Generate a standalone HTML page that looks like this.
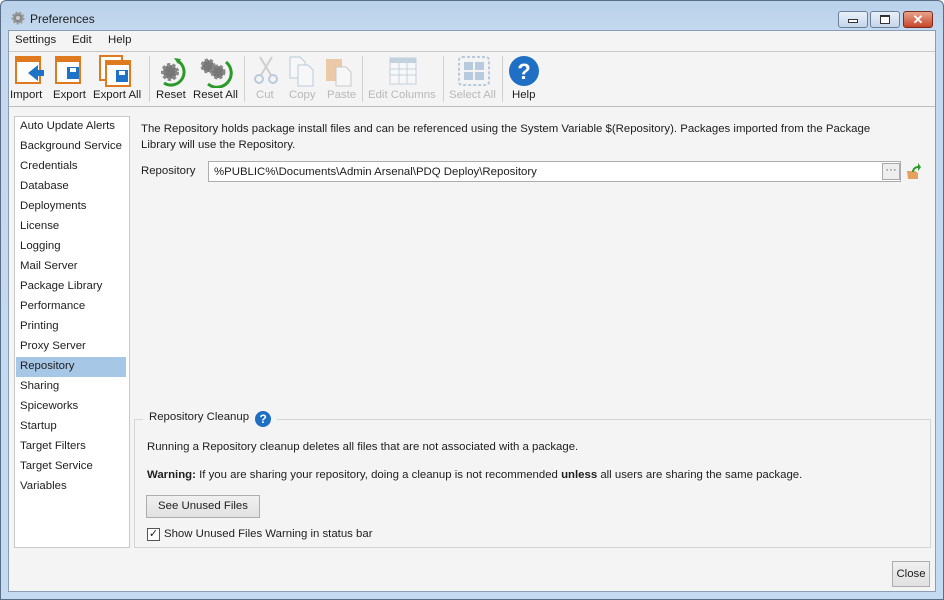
<!DOCTYPE html>
<html><head><style>
*{margin:0;padding:0;box-sizing:border-box}
body{width:944px;height:600px;overflow:hidden;background:#fff;font:11.4px "Liberation Sans",sans-serif;color:#1e1e1e;position:relative}
.frame{position:absolute;left:0;top:0;width:944px;height:600px;background:linear-gradient(#b9d1ea,#c4d9ef 30px,#c4daf0);border:1px solid #5a6e87;border-radius:6px 6px 0 0}
.client{position:absolute;left:8px;top:30px;width:928px;height:562px;background:#f4f4f4;border:1px solid #8a9db5}
.abs{position:absolute;white-space:nowrap}
.tb{position:absolute;top:89px;font-size:11.4px;white-space:nowrap}
.dis{color:#b8b8b8}
.sep{position:absolute;top:56px;width:1px;height:46px;background:#d0d0d0}
.list{position:absolute;left:14px;top:116px;width:116px;height:432px;background:#fff;border:1px solid #c8c8c8}
.list div{height:20px;line-height:18px;padding-left:4px;margin:0 3px 0 1px;white-space:nowrap}
.sel{background:#a7c7e7}
.wb{position:absolute;top:11px;height:17px;border:1px solid #6d7f98;border-radius:3px;background:linear-gradient(#eaf1fa,#c4d5ea)}
</style></head><body>
<div class="frame"></div>
<svg class="abs" style="left:10px;top:10px" width="16" height="16" viewBox="0 0 16 16"><circle cx="8" cy="8" r="5" fill="#888" stroke="#999" stroke-width="3" stroke-dasharray="2 1.5"/><circle cx="8" cy="8" r="2" fill="#ccc"/></svg>
<div class="abs" style="left:30px;top:12px;font-size:12px">Preferences</div>
<div class="wb" style="left:838px;width:30px"><div style="position:absolute;left:9px;top:7px;width:10px;height:4px;border:1px solid #333;background:#fff"></div></div>
<div class="wb" style="left:870px;width:30px"><div style="position:absolute;left:9px;top:3px;width:10px;height:9px;border:1px solid #333;border-top-width:2px;background:#fff"></div></div>
<div class="wb" style="left:903px;width:30px;background:linear-gradient(#e8a48c,#c7452b);border-color:#7d2a1a;color:#fff;font-weight:bold;text-align:center;line-height:15px;font-size:13px">✕</div>
<div class="client"></div>
<div class="abs" style="left:15px;top:34px">Settings</div>
<div class="abs" style="left:72px;top:34px">Edit</div>
<div class="abs" style="left:108px;top:34px">Help</div>
<div class="abs" style="left:9px;top:51px;width:926px;height:1px;background:#c8c8c8"></div>
<div class="abs" style="left:9px;top:106px;width:926px;height:1px;background:#bdbdbd"></div>
<svg class="abs" style="left:14px;top:55px" width="34" height="32"><rect x="2" y="2" width="24" height="26" fill="#fff" stroke="#e07a1f" stroke-width="2"/><rect x="2" y="2" width="24" height="5" fill="#e07a1f"/><path d="M14 18l10-8v5h6v6h-6v5z" fill="#1f73c7"/></svg>
<svg class="abs" style="left:54px;top:55px" width="34" height="32"><rect x="2" y="2" width="24" height="26" fill="#fff" stroke="#e07a1f" stroke-width="2"/><rect x="2" y="2" width="24" height="5" fill="#e07a1f"/><rect x="13" y="12" width="12" height="12" fill="#1f73c7"/><rect x="16" y="13" width="6" height="4" fill="#fff"/></svg>
<svg class="abs" style="left:98px;top:54px" width="40" height="34"><rect x="2" y="2" width="22" height="24" fill="#fff" stroke="#e07a1f" stroke-width="2"/><rect x="8" y="7" width="24" height="25" fill="#fff" stroke="#e07a1f" stroke-width="2"/><rect x="8" y="7" width="24" height="4" fill="#e07a1f"/><rect x="18" y="16" width="12" height="12" fill="#1f73c7"/><rect x="21" y="17" width="6" height="4" fill="#fff"/></svg>
<svg class="abs" style="left:154px;top:55px" width="34" height="32"><circle cx="16" cy="17" r="7" fill="#777" stroke="#888" stroke-width="4" stroke-dasharray="3 2"/><path d="M24 6a12 12 0 0 1-14 22" fill="none" stroke="#2a9a2a" stroke-width="3"/><path d="M20 3l7 1-3 5z" fill="#2a9a2a"/></svg>
<svg class="abs" style="left:196px;top:54px" width="40" height="34"><circle cx="12" cy="12" r="6" fill="#777" stroke="#888" stroke-width="3" stroke-dasharray="3 2"/><circle cx="22" cy="18" r="6" fill="#777" stroke="#888" stroke-width="3" stroke-dasharray="3 2"/><path d="M30 8a13 13 0 0 1-18 22" fill="none" stroke="#2a9a2a" stroke-width="3"/></svg>
<svg class="abs" style="left:252px;top:55px" width="28" height="32" opacity=".35"><circle cx="7" cy="24" r="4" fill="none" stroke="#4a7fb8" stroke-width="2"/><circle cx="21" cy="24" r="4" fill="none" stroke="#4a7fb8" stroke-width="2"/><path d="M9 20L20 2M19 20L8 2" stroke="#888" stroke-width="2"/></svg>
<svg class="abs" style="left:288px;top:55px" width="30" height="32" opacity=".35"><path d="M2 2h10l5 5v16H2z" fill="#fff" stroke="#4a7fb8"/><path d="M10 10h10l5 5v16H10z" fill="#fff" stroke="#4a7fb8"/></svg>
<svg class="abs" style="left:324px;top:55px" width="34" height="32" opacity=".35"><rect x="2" y="4" width="16" height="22" fill="#e07a1f"/><path d="M12 12h10l5 5v14H12z" fill="#fff" stroke="#777"/></svg>
<svg class="abs" style="left:388px;top:56px" width="30" height="30" opacity=".35"><rect x="2" y="2" width="26" height="26" fill="#fff" stroke="#6a8fb8"/><rect x="2" y="2" width="26" height="5" fill="#6a8fb8"/><path d="M2 13h26M2 19h26M11 7v21M19 7v21" stroke="#6a8fb8"/></svg>
<svg class="abs" style="left:458px;top:56px" width="32" height="30" opacity=".35"><rect x="1" y="1" width="30" height="28" rx="3" fill="none" stroke="#4a7fb8" stroke-dasharray="3 2" stroke-width="2"/><rect x="6" y="6" width="9" height="8" fill="#4a7fb8"/><rect x="17" y="6" width="9" height="8" fill="#4a7fb8"/><rect x="6" y="16" width="9" height="8" fill="#4a7fb8"/><rect x="17" y="16" width="9" height="8" fill="#4a7fb8"/></svg>
<svg class="abs" style="left:508px;top:55px" width="32" height="32"><circle cx="16" cy="16" r="15" fill="#1f6fc5"/><text x="16" y="24" text-anchor="middle" fill="#fff" font-family="Liberation Sans" font-weight="bold" font-size="22">?</text></svg>
<div class="tb" style="left:10px">Import</div>
<div class="tb" style="left:53px">Export</div>
<div class="tb" style="left:93px">Export All</div>
<div class="tb" style="left:156px">Reset</div>
<div class="tb" style="left:193px">Reset All</div>
<div class="tb dis" style="left:256px">Cut</div>
<div class="tb dis" style="left:289px">Copy</div>
<div class="tb dis" style="left:327px">Paste</div>
<div class="tb dis" style="left:368px">Edit Columns</div>
<div class="tb dis" style="left:449px">Select All</div>
<div class="tb" style="left:512px">Help</div>
<div class="sep" style="left:149px"></div><div class="sep" style="left:244px"></div><div class="sep" style="left:362px"></div><div class="sep" style="left:443px"></div><div class="sep" style="left:502px"></div>
<div class="list">
<div>Auto Update Alerts</div><div>Background Service</div><div>Credentials</div><div>Database</div><div>Deployments</div><div>License</div><div>Logging</div><div>Mail Server</div><div>Package Library</div><div>Performance</div><div>Printing</div><div>Proxy Server</div><div class="sel">Repository</div><div>Sharing</div><div>Spiceworks</div><div>Startup</div><div>Target Filters</div><div>Target Service</div><div>Variables</div>
</div>
<div class="abs" style="left:141px;top:121px;line-height:16px">The Repository holds package install files and can be referenced using the System Variable $(Repository). Packages imported from the Package<br>Library will use the Repository.</div>
<div class="abs" style="left:141px;top:165px">Repository</div>
<div class="abs" style="left:208px;top:161px;width:693px;height:21px;background:#fff;border:1px solid #abadb3;padding:4px 0 0 5px">%PUBLIC%\Documents\Admin Arsenal\PDQ Deploy\Repository</div>
<div class="abs" style="left:882px;top:163px;width:18px;height:17px;border:1px solid #aaa;background:#eee;text-align:center;line-height:12px;color:#555">···</div>
<svg class="abs" style="left:905px;top:162px" width="16" height="18"><path d="M2 9h8l3 2v6H3z" fill="#e8a060"/><path d="M7 10a6 6 0 0 1 6-6V1l3 4-3 4V6a4 4 0 0 0-4 4z" fill="#2a9a2a"/></svg>
<div class="abs" style="left:134px;top:419px;width:797px;height:129px;border:1px solid #d5d5d5"></div>
<div class="abs" style="left:143px;top:411px;background:#f4f4f4;padding:0 6px">Repository Cleanup <span style="display:inline-block;width:16px;height:16px;border-radius:8px;background:#1f6fc5;color:#fff;text-align:center;font-weight:bold;line-height:16px;font-size:12px;margin-left:3px;vertical-align:-3px">?</span></div>
<div class="abs" style="left:147px;top:441px">Running a Repository cleanup deletes all files that are not associated with a package.</div>
<div class="abs" style="left:147px;top:469px"><b>Warning:</b> If you are sharing your repository, doing a cleanup is not recommended <b>unless</b> all users are sharing the same package.</div>
<div class="abs" style="left:146px;top:495px;width:114px;height:23px;border:1px solid #adadad;background:linear-gradient(#f0f0f0,#e1e1e1);text-align:center;line-height:21px">See Unused Files</div>
<div class="abs" style="left:147px;top:528px;width:13px;height:13px;border:1px solid #555;background:#fff;font-size:11px;line-height:11px;text-align:center">✓</div>
<div class="abs" style="left:164px;top:528px">Show Unused Files Warning in status bar</div>
<div class="abs" style="left:892px;top:561px;width:38px;height:26px;border:1px solid #adadad;background:linear-gradient(#f0f0f0,#e1e1e1);text-align:center;line-height:24px">Close</div>
</body></html>
